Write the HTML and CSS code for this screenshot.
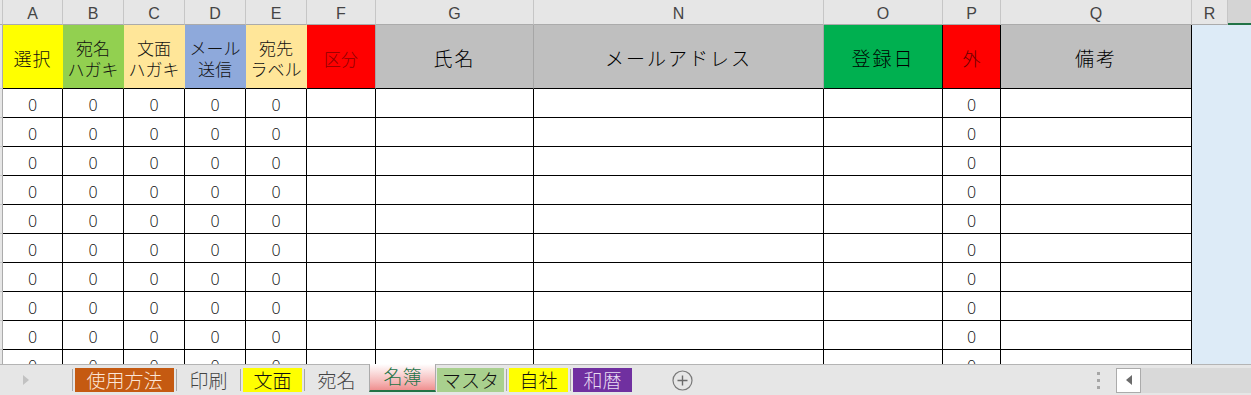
FILE: index.html
```html
<!DOCTYPE html>
<html lang="ja">
<head>
<meta charset="utf-8">
<title>名簿</title>
<link rel="stylesheet" href="styles.css">
</head>
<body>
<div class="app">
  <div class="sheet">
    <div class="corner"></div>
    <div class="ch">A</div><div class="ch">B</div><div class="ch">C</div><div class="ch">D</div><div class="ch">E</div><div class="ch">F</div><div class="ch">G</div><div class="ch">N</div><div class="ch">O</div><div class="ch">P</div><div class="ch">Q</div><div class="ch">R</div><div class="ch ch-sel"></div>

    <div class="rh"></div>
    <div class="hd yellow big">選択</div>
    <div class="hd green">宛名<br>ハガキ</div>
    <div class="hd peach">文面<br>ハガキ</div>
    <div class="hd blue">メール<br>送信</div>
    <div class="hd peach">宛先<br>ラベル</div>
    <div class="hd red gline">区分</div>
    <div class="hd gray wide gline">氏名</div>
    <div class="hd gray wide gline">メールアドレス</div>
    <div class="hd dgreen wide bline">登録日</div>
    <div class="hd red dark bline">外</div>
    <div class="hd gray wide bline">備考</div>
    <div class="bl"></div><div class="bl"></div>

    <div class="rh"></div><div class="c">0</div><div class="c">0</div><div class="c">0</div><div class="c">0</div><div class="c">0</div><div class="c"></div><div class="c"></div><div class="c"></div><div class="c"></div><div class="c">0</div><div class="c"></div><div class="bl"></div><div class="bl"></div>
    <div class="rh"></div><div class="c">0</div><div class="c">0</div><div class="c">0</div><div class="c">0</div><div class="c">0</div><div class="c"></div><div class="c"></div><div class="c"></div><div class="c"></div><div class="c">0</div><div class="c"></div><div class="bl"></div><div class="bl"></div>
    <div class="rh"></div><div class="c">0</div><div class="c">0</div><div class="c">0</div><div class="c">0</div><div class="c">0</div><div class="c"></div><div class="c"></div><div class="c"></div><div class="c"></div><div class="c">0</div><div class="c"></div><div class="bl"></div><div class="bl"></div>
    <div class="rh"></div><div class="c">0</div><div class="c">0</div><div class="c">0</div><div class="c">0</div><div class="c">0</div><div class="c"></div><div class="c"></div><div class="c"></div><div class="c"></div><div class="c">0</div><div class="c"></div><div class="bl"></div><div class="bl"></div>
    <div class="rh"></div><div class="c">0</div><div class="c">0</div><div class="c">0</div><div class="c">0</div><div class="c">0</div><div class="c"></div><div class="c"></div><div class="c"></div><div class="c"></div><div class="c">0</div><div class="c"></div><div class="bl"></div><div class="bl"></div>
    <div class="rh"></div><div class="c">0</div><div class="c">0</div><div class="c">0</div><div class="c">0</div><div class="c">0</div><div class="c"></div><div class="c"></div><div class="c"></div><div class="c"></div><div class="c">0</div><div class="c"></div><div class="bl"></div><div class="bl"></div>
    <div class="rh"></div><div class="c">0</div><div class="c">0</div><div class="c">0</div><div class="c">0</div><div class="c">0</div><div class="c"></div><div class="c"></div><div class="c"></div><div class="c"></div><div class="c">0</div><div class="c"></div><div class="bl"></div><div class="bl"></div>
    <div class="rh"></div><div class="c">0</div><div class="c">0</div><div class="c">0</div><div class="c">0</div><div class="c">0</div><div class="c"></div><div class="c"></div><div class="c"></div><div class="c"></div><div class="c">0</div><div class="c"></div><div class="bl"></div><div class="bl"></div>
    <div class="rh"></div><div class="c">0</div><div class="c">0</div><div class="c">0</div><div class="c">0</div><div class="c">0</div><div class="c"></div><div class="c"></div><div class="c"></div><div class="c"></div><div class="c">0</div><div class="c"></div><div class="bl"></div><div class="bl"></div>
    <div class="rh"></div><div class="c">0</div><div class="c">0</div><div class="c">0</div><div class="c">0</div><div class="c">0</div><div class="c"></div><div class="c"></div><div class="c"></div><div class="c"></div><div class="c">0</div><div class="c"></div><div class="bl"></div><div class="bl"></div>
  </div>

  <div class="tabbar">
    <div class="nav"><span class="tri-r"></span></div>
    <div class="sep"></div>
    <div class="tab t-orange w4">使用方法</div>
    <div class="sep"></div>
    <div class="tab t-plain w2">印刷</div>
    <div class="sep"></div>
    <div class="tab t-yellow w2">文面</div>
    <div class="sep"></div>
    <div class="tab t-plain w2">宛名</div>
    <div class="tab t-active">名簿</div>
    <div class="tab t-green w3">マスタ</div>
    <div class="sep"></div>
    <div class="tab t-yellow w2">自社</div>
    <div class="sep"></div>
    <div class="tab t-purple w2">和暦</div>
    <div class="add">
      <svg width="21" height="21" viewBox="0 0 21 21"><circle cx="10.5" cy="10.5" r="9.5" fill="none" stroke="#7a7a7a" stroke-width="1.2"/><path d="M10.5 5.5v10M5.5 10.5h10" stroke="#6a6a6a" stroke-width="1.4"/></svg>
    </div>
    <div class="spacer"></div>
    <div class="dots"><span></span><span></span><span></span></div>
    <div class="scroll-btn"><span class="tri-l"></span></div>
    <div class="track"></div>
  </div>
</div>
</body>
</html>
```

FILE: styles.css
```css
* { box-sizing: border-box; }
html, body { margin: 0; padding: 0; }
body {
  width: 1251px;
  height: 395px;
  overflow: hidden;
  background: #e6e6e6;
  font-family: "Noto Sans CJK JP", sans-serif;
  color: #111;
}
.app {
  display: flex;
  flex-direction: column;
  height: 395px;
}
.sheet {
  height: 364px;
  overflow: hidden;
  display: grid;
  grid-template-columns: 3px 60px 61px 61px 61px 61px 69px 158px 290px 119px 58px 191px 36px 1fr;
  grid-template-rows: 25px 64px repeat(10, 29px);
  background: #ddebf7;
}
.corner {
  background: #e6e6e6;
  border-bottom: 1px solid #ababab;
  border-right: 1px solid #c6c6c6;
}
.ch {
  background: #e6e6e6;
  border-right: 1px solid #c6c6c6;
  border-bottom: 1px solid #ababab;
  display: flex;
  align-items: center;
  justify-content: center;
  padding-top: 4px;
  font-family: "Liberation Sans", sans-serif;
  font-size: 16px;
  color: #444;
}
.ch-sel {
  background: #d4d4d4;
  border-right: none;
  border-bottom: 2px solid #217346;
}
.rh {
  background: #e6e6e6;
  border-right: 1px solid #ababab;
  border-bottom: 1px solid #c6c6c6;
}
.hd {
  display: flex;
  align-items: center;
  justify-content: center;
  text-align: center;
  padding-top: 3px;
  font-size: 17px;
  line-height: 21px;
  font-weight: 300;
  border-right: 1px solid transparent;
  border-bottom: 1px solid #000;
}
.hd.big { font-size: 18px; letter-spacing: 1px; }
.hd.wide { font-size: 19px; letter-spacing: 2px; padding-top: 2px; color: #000; }
.gline { border-right-color: #a6a6a6; }
.bline { border-right-color: #000; }
.yellow { background: #ffff00; }
.green { background: #92d050; }
.peach { background: #ffe699; }
.blue { background: #8ea9db; }
.red { background: #ff0000; color: #8e0000; }
.red.dark { color: #6a0000; font-size: 18px; letter-spacing: 0; }
.gray { background: #bfbfbf; }
.dgreen { background: #00b050; }
.c {
  background: #fff;
  border-right: 1px solid #000;
  border-bottom: 1px solid #000;
  display: flex;
  align-items: center;
  justify-content: center;
  padding-top: 5px;
  font-family: "DejaVu Sans", sans-serif;
  font-size: 16px;
  font-weight: 300;
  font-stretch: condensed;
  color: #111;
}
.bl { background: #ddebf7; }

/* tab bar */
.tabbar {
  height: 31px;
  display: flex;
  align-items: center;
  background: #e6e6e6;
  border-top: 1px solid #b4b4b4;
}
.nav {
  width: 72px;
  display: flex;
  align-items: center;
  padding-left: 23px;
}
.tri-r {
  width: 0; height: 0;
  border-top: 5px solid transparent;
  border-bottom: 5px solid transparent;
  border-left: 6px solid #c2c2c2;
}
.sep {
  width: 1px;
  height: 22px;
  background: #a6a6a6;
}
.tab {
  height: 24px;
  margin: 0 2px;
  display: flex;
  align-items: center;
  justify-content: center;
  font-size: 19px;
  line-height: 24px;
  font-weight: 300;
  white-space: nowrap;
}
.w2 { width: 59px; }
.w3 { width: 67px; }
.w4 { width: 99px; }
.t-orange { background: #c55a11; color: #fbe5d6; }
.t-plain { color: #444; }
.t-yellow { background: #ffff00; color: #111; }
.t-green { background: #a9d08e; color: #111; margin-left: 1px; }
.t-purple { background: #7030a0; color: #e8dcf2; }
.t-active {
  align-self: flex-start;
  margin: -1px 0 0 1px;
  width: 67px;
  height: 28px;
  padding-bottom: 2px;
  background: linear-gradient(#ffffff, #f5b5b5 70%, #ef8f8f);
  border-left: 1px solid #ababab;
  border-right: 1px solid #ababab;
  border-bottom: 2px solid #217346;
  color: #217346;
}
.add {
  margin-left: 38px;
  display: flex;
  align-items: center;
}
.spacer { flex: 1; }
.dots {
  display: flex;
  flex-direction: column;
  gap: 4px;
  margin-right: 16px;
}
.dots span {
  width: 3px;
  height: 3px;
  background: #a6a6a6;
}
.scroll-btn {
  width: 25px;
  height: 25px;
  background: #fff;
  border: 1px solid #ababab;
  display: flex;
  align-items: center;
  justify-content: center;
}
.tri-l {
  width: 0; height: 0;
  border-top: 5px solid transparent;
  border-bottom: 5px solid transparent;
  border-right: 6px solid #6b6b6b;
}
.track {
  width: 110px;
  height: 25px;
  background: #d9d9d9;
}
```
